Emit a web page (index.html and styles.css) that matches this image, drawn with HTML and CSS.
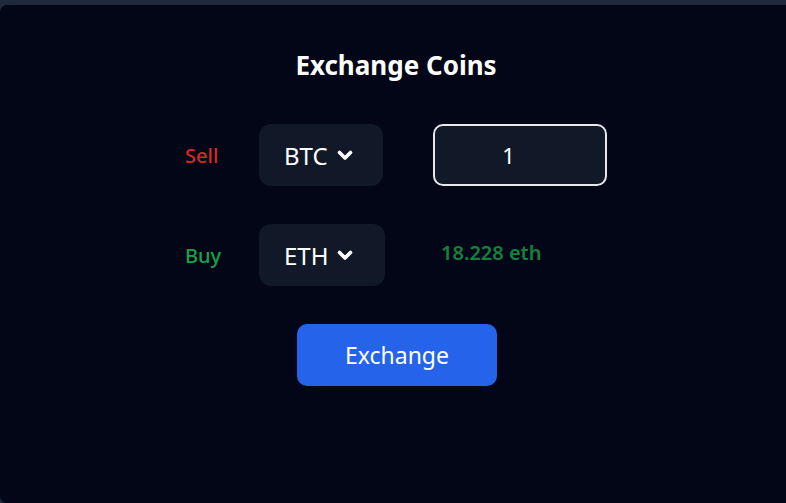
FILE: index.html
```html
<!DOCTYPE html>
<html lang="en">
<head>
<meta charset="utf-8">
<title>Exchange Coins</title>
<link rel="stylesheet" href="styles.css">
</head>
<body>
<main class="card">
  <h1 class="title">Exchange Coins</h1>
  <div class="form">
    <span class="label sell">Sell</span>
    <div class="cell">
      <button class="select select-btc" type="button">
        <span>BTC</span>
        <svg class="chev" viewBox="0 0 16 11" width="16" height="11"><polyline points="2.5,2.5 8,8 13.5,2.5" fill="none" stroke="#fff" stroke-width="3.6" stroke-linecap="round" stroke-linejoin="round"/></svg>
      </button>
    </div>
    <div class="cell">
      <input class="amount" type="text" value="1">
    </div>

    <span class="label buy">Buy</span>
    <div class="cell">
      <button class="select select-eth" type="button">
        <span>ETH</span>
        <svg class="chev" viewBox="0 0 16 11" width="16" height="11"><polyline points="2.5,2.5 8,8 13.5,2.5" fill="none" stroke="#fff" stroke-width="3.6" stroke-linecap="round" stroke-linejoin="round"/></svg>
      </button>
    </div>
    <div class="cell">
      <span class="result">18.228 eth</span>
    </div>
  </div>
  <button class="exchange" type="button">Exchange</button>
</main>
</body>
</html>
```

FILE: styles.css
```css
html, body {
  margin: 0;
  padding: 0;
  height: 100%;
}
body {
  background: #1e293b;
  font-family: "Noto Sans", "Open Sans", sans-serif;
  color: #fff;
  padding-top: 5px;
  box-sizing: border-box;
  overflow: hidden;
}
.card {
  width: 794px;
  height: 100%;
  background: #020617;
  border-radius: 7px;
  display: flex;
  flex-direction: column;
  align-items: center;
  box-sizing: border-box;
  padding-top: 44px;
}
.title {
  margin: 0 2px 0 0;
  font-size: 26px;
  font-weight: 700;
  line-height: 32px;
  height: 32px;
}
.form {
  margin: 43px 2px 0 0;
  display: grid;
  grid-template-columns: 74px 174px 174px;
  grid-auto-rows: 62px;
  row-gap: 38px;
  align-items: center;
}
.label {
  font-size: 20px;
  font-weight: 500;
}
.sell { color: #dc2626; }
.buy { color: #16a34a; }
.cell {
  display: flex;
  align-items: center;
  height: 62px;
}
.select {
  height: 62px;
  border: none;
  border-radius: 12px;
  background: #111827;
  color: #fff;
  font-family: inherit;
  font-size: 24px;
  display: flex;
  align-items: center;
  gap: 9px;
  padding: 0 0 0 25px;
  box-sizing: border-box;
}
.select-btc { width: 124px; }
.select-eth { width: 126px; }
.chev { margin-top: 1px; }
.amount {
  width: 174px;
  height: 62px;
  box-sizing: border-box;
  border: 2px solid #e5e7eb;
  border-radius: 10px;
  background: #111827;
  color: #fff;
  font-family: inherit;
  font-size: 22px;
  text-align: center;
  padding: 0 23px 0 0;
  outline: none;
}
.result {
  padding-left: 8px;
  margin-top: -6px;
  color: #15803d;
  font-size: 20px;
  font-weight: 600;
}
.exchange {
  margin-top: 38px;
  width: 200px;
  height: 62px;
  border: none;
  border-radius: 10px;
  background: #2563eb;
  color: #fff;
  font-family: inherit;
  font-size: 23px;
}
```
